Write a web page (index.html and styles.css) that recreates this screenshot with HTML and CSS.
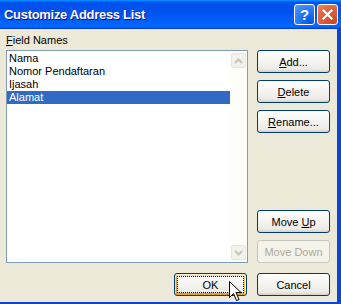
FILE: index.html
```html
<!DOCTYPE html>
<html lang="en">
  <head>
    <meta charset="UTF-8" />
    <title>Customize Address List</title>
    <link rel="stylesheet" href="styles.css">
  </head>
  <body>
    <div class="window">
      <div class="titlebar">
        <span class="title">Customize Address List</span>
        <div class="title-buttons">
          <span class="tbtn help">?</span>
          <span class="tbtn close">
            <svg width="11" height="11" viewBox="0 0 11 11">
              <path d="M1.5 1.5 L9.5 9.5 M9.5 1.5 L1.5 9.5" stroke="#fff" stroke-width="2.2" stroke-linecap="square" />
            </svg>
          </span>
        </div>
      </div>

      <div class="frame">
        <div class="client">
          <div class="main">
            <label class="field-label"><u>F</u>ield Names</label>
            <span></span>

            <div class="listbox">
              <ul class="items">
                <li>Nama</li>
                <li>Nomor Pendaftaran</li>
                <li>Ijasah</li>
                <li class="selected">Alamat</li>
              </ul>
              <div class="scrollbar">
                <span class="arrow">
                  <svg width="9" height="6" viewBox="0 0 9 6">
                    <path d="M1 5 L4.5 1.5 L8 5" fill="none" stroke="#c8c6bb" stroke-width="2" />
                  </svg>
                </span>
                <span class="arrow">
                  <svg width="9" height="6" viewBox="0 0 9 6">
                    <path d="M1 1 L4.5 4.5 L8 1" fill="none" stroke="#c8c6bb" stroke-width="2" />
                  </svg>
                </span>
              </div>
            </div>

            <div class="side">
              <div class="group">
                <button class="btn"><u>A</u>dd...</button>
                <button class="btn"><u>D</u>elete</button>
                <button class="btn"><u>R</u>ename...</button>
              </div>
              <div class="group">
                <button class="btn">Move <u>U</u>p</button>
                <button class="btn" disabled>Move Down</button>
              </div>
            </div>
          </div>

          <div class="footer">
            <button class="btn default">OK</button>
            <button class="btn">Cancel</button>
          </div>
        </div>
      </div>

      <svg class="cursor" width="13" height="21" viewBox="0 0 13 21">
        <path d="M0.5 0.5 L0.5 16.5 L4.5 12.5 L7.5 19.5 L10 18.5 L7 11.5 L12 11.5 Z" fill="#fff" stroke="#000" stroke-width="1" />
      </svg>
    </div>
  </body>
</html>
```

FILE: styles.css
```css
body {
  margin: 0;
  font-family: "Liberation Sans", Arial, sans-serif;
  font-size: 11px;
  background: #ece9d8;
}
.window {
  position: relative;
  width: 341px;
  height: 304px;
  display: flex;
  flex-direction: column;
  overflow: hidden;
}
.titlebar {
  height: 29px;
  flex: none;
  display: flex;
  align-items: center;
  justify-content: space-between;
  padding: 0 3px 0 4px;
  background: linear-gradient(180deg, #0997ff, #0053ee 8%, #0050ee 40%, #0066ff 88%, #0066ff 93%, #005bff 95%, #003dd7 96%, #003dd7);
}
.title {
  color: #fff;
  font-weight: bold;
  font-size: 13px;
  letter-spacing: -0.3px;
  text-shadow: 1px 1px #0f1089;
}
.title-buttons {
  display: flex;
  gap: 2px;
}
.tbtn {
  width: 21px;
  height: 21px;
  box-sizing: border-box;
  border: 1px solid #fff;
  border-radius: 3px;
  display: flex;
  align-items: center;
  justify-content: center;
  color: #fff;
  font-weight: bold;
  font-size: 15px;
}
.help {
  background: radial-gradient(circle at 80% 90%, #0054e9, #2f7ff5 60%, #5a9cfb);
}
.close {
  background: radial-gradient(circle at 80% 90%, #cc4628, #e0633c 60%, #ec8a66);
}
.frame {
  flex: 1;
  background: #0b44d6;
  padding: 0 4px 2px 0;
  display: flex;
}
.client {
  flex: 1;
  background: #ece9d8;
  padding: 5px 0 0 6px;
}
.main {
  display: grid;
  grid-template-columns: 242px 73px;
  grid-template-rows: 16px 213px;
  column-gap: 9px;
}
.field-label {
  line-height: 13px;
  color: #000;
}
.listbox {
  box-sizing: border-box;
  border: 1px solid #7f9db9;
  background: #fff;
  display: flex;
}
.items {
  flex: 1;
  list-style: none;
  margin: 0;
  padding: 1px 0 0 0;
}
.items li {
  height: 13px;
  line-height: 13px;
  padding-left: 2px;
  color: #000;
}
.items li.selected {
  background: #316ac5;
  color: #fff;
}
.scrollbar {
  width: 17px;
  background: #fdfdfa;
  display: flex;
  flex-direction: column;
  justify-content: space-between;
  padding: 2px 0 2px 1px;
  box-sizing: border-box;
}
.arrow {
  width: 15px;
  height: 15px;
  box-sizing: border-box;
  border: 1px solid #e8e6da;
  border-radius: 2px;
  background: #f3f2ea;
  display: flex;
  align-items: center;
  justify-content: center;
}
.side {
  display: flex;
  flex-direction: column;
  justify-content: space-between;
}
.group {
  display: flex;
  flex-direction: column;
  gap: 7px;
}
.btn {
  width: 73px;
  height: 23px;
  box-sizing: border-box;
  border: 1px solid #003c74;
  border-radius: 3px;
  background: linear-gradient(180deg, #fff, #ecebe6 86%, #d6d0c5);
  font-family: "Liberation Sans", Arial, sans-serif;
  font-size: 11px;
  color: #000;
  padding: 0;
}
.btn:disabled {
  border-color: #c9c7ba;
  background: #f5f4ea;
  color: #aca899;
}
.btn.default {
  box-shadow: inset -1px 1px #fff0cf, inset 1px 2px #fdd889, inset -2px 2px #fbc761, inset 2px -2px #e5a01a;
  outline: 1px dotted #000;
  outline-offset: -4px;
}
.footer {
  width: 324px;
  margin-top: 10px;
  display: flex;
  justify-content: flex-end;
  gap: 10px;
}
.cursor {
  position: absolute;
  left: 229px;
  top: 281px;
}
```
